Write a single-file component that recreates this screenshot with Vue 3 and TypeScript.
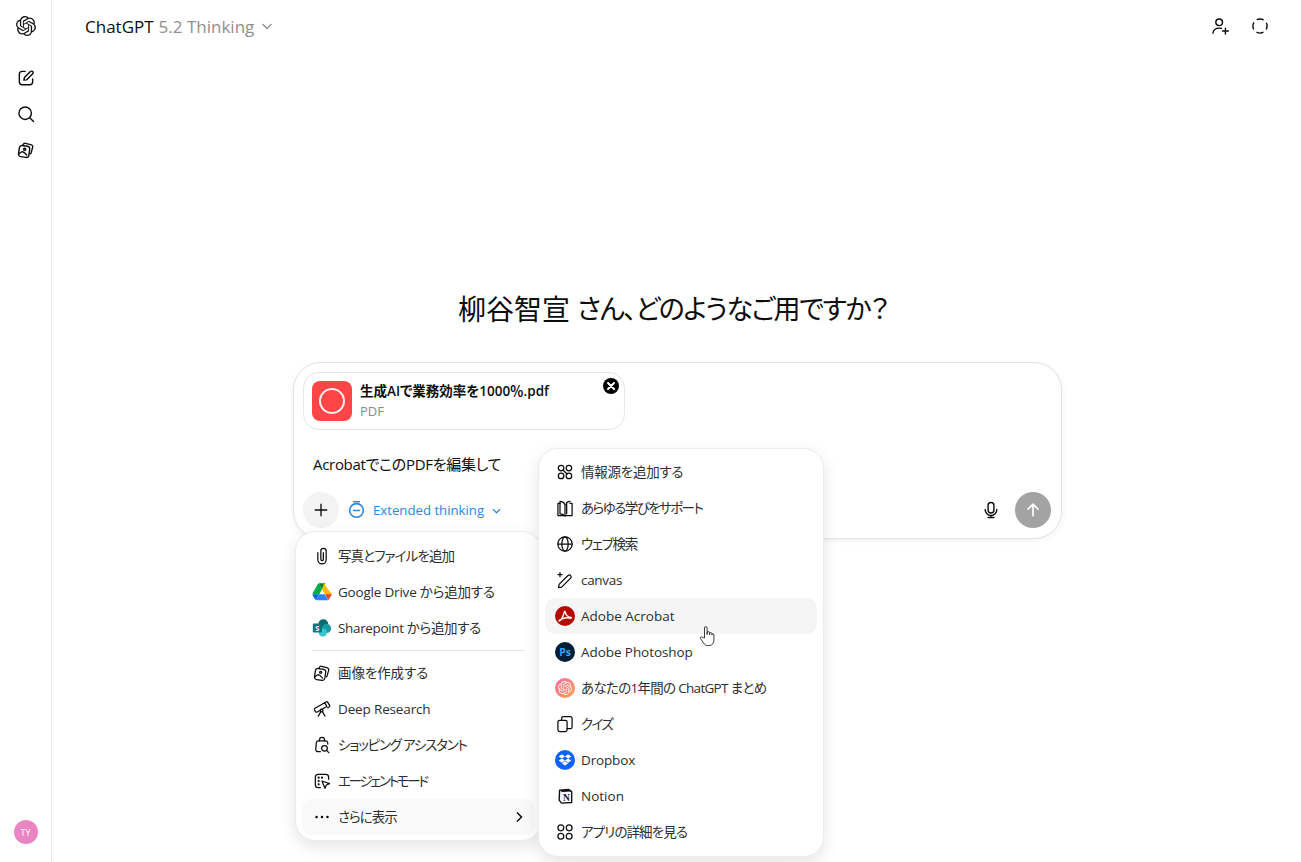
<script setup lang="ts">
const stroke: Record<string, string> = {
  clip: '<path d="M7 8v8.500a5 5 0 0 0 10 0V6a3.200 3.200 0 0 0-6.400 0v10a1.500 1.500 0 0 0 3 0V8"/>',
  image: '<path d="M8.200 6.600l.5-1.300A2.400 2.400 0 0 1 11.600 4l6.800 1.900a2.400 2.400 0 0 1 1.600 3l-1.800 6.300a2.400 2.400 0 0 1-1.200 1.400"/><rect x="3.500" y="7" width="12.500" height="13.500" rx="3" transform="rotate(8 9.700 13.700)"/><path d="M3.800 16.500c2-2.600 4-3 6-1.400l3 3"/><circle cx="10.400" cy="11.200" r="1.300"/>',
  scope: '<path d="M3.600 11.200l11.600-6.700 2.600 4.400-11.500 6.700a1.600 1.600 0 0 1-2.100-.5l-1.100-1.800a1.600 1.600 0 0 1 .5-2.100z"/><path d="M15.200 4.500l2.200-1.200a1 1 0 0 1 1.300.4l2.600 4.300a1 1 0 0 1-.4 1.300l-2.100 1.200"/><circle cx="11.500" cy="13.700" r="1.700"/><path d="M10.500 15.400l-3 5.100M12.600 15.300l3 5.200"/>',
  shop: '<path d="M9 7V5.800a3 3 0 0 1 6 0V7"/><path d="M10 20H7a2.500 2.500 0 0 1-2.500-2.700l.7-8A2.500 2.500 0 0 1 7.700 7h8.600a2.500 2.500 0 0 1 2.500 2.300l.2 1.700"/><circle cx="15" cy="16" r="3.400"/><path d="M17.500 18.500l2.700 2.700"/>',
  agent: '<path d="M10 20H7.500A3.500 3.500 0 0 1 4 16.500v-9A3.500 3.500 0 0 1 7.500 4h9A3.500 3.500 0 0 1 20 7.500V10"/><path d="M12 12l9 3.200-3.800 1.600-1.700 3.900z"/><circle cx="8" cy="8" r=".6"/><circle cx="8" cy="12" r=".6"/><circle cx="12" cy="8" r=".6"/><circle cx="8" cy="16" r=".6"/>',
  sources: '<circle cx="7.300" cy="7.300" r="3.300"/><circle cx="16.700" cy="16.700" r="3.300"/><circle cx="7.300" cy="16.700" r="3.300"/><circle cx="16.700" cy="7.300" r="3.300"/><path d="M9.600 9.600l4.800 4.800"/>',
  book: '<path d="M12 7.500C10.500 5 8 4 6 4v15c2.500 0 4.500 1 6 2.500"/><path d="M12 7.500v14"/><path d="M6 6.500H3.500v14.500H12M14 5.500c1-.8 2.500-1.300 4-1.500M18 6.500h2.500V21H12"/><path d="M14 5.500V19"/>',
  globe: '<circle cx="12" cy="12" r="8.600"/><path d="M3.400 12h17.200"/><ellipse cx="12" cy="12" rx="3.800" ry="8.600"/>',
  canvas: '<path d="M8 20.500l-3.800.6.700-3.800L15.600 6.600a2.200 2.200 0 0 1 3.100 0l.1.100a2.200 2.200 0 0 1 0 3.100z"/><path d="M6 3v5M3.500 5.500h5"/>',
  quiz: '<rect x="3.500" y="7.500" width="11" height="13.500" rx="2"/><path d="M8 7.500V5a2 2 0 0 1 2-2h8.500a2 2 0 0 1 2 2v10.500a2 2 0 0 1-2 2h-4"/>',
  apps: '<circle cx="7" cy="7" r="3.500"/><circle cx="17" cy="7" r="3.500"/><circle cx="7" cy="17" r="3.500"/><circle cx="17" cy="17" r="3.500"/>'
}

const logo = 'M22.2819 9.8211a5.9847 5.9847 0 0 0-.5157-4.9108 6.0462 6.0462 0 0 0-6.5098-2.9A6.0651 6.0651 0 0 0 4.9807 4.1818a5.9847 5.9847 0 0 0-3.9977 2.9 6.0462 6.0462 0 0 0 .7427 7.0966 5.98 5.98 0 0 0 .511 4.9107 6.051 6.051 0 0 0 6.5146 2.9001A5.9847 5.9847 0 0 0 13.2599 24a6.0557 6.0557 0 0 0 5.7718-4.2058 5.9894 5.9894 0 0 0 3.9977-2.9001 6.0557 6.0557 0 0 0-.7475-7.0729zm-9.022 12.6081a4.4755 4.4755 0 0 1-2.8764-1.0408l.1419-.0804 4.7783-2.7582a.7948.7948 0 0 0 .3927-.6813v-6.7369l2.02 1.1686a.071.071 0 0 1 .038.052v5.5826a4.504 4.504 0 0 1-4.4945 4.4944zm-9.6607-4.1254a4.4708 4.4708 0 0 1-.5346-3.0137l.142.0852 4.783 2.7582a.7712.7712 0 0 0 .7806 0l5.8428-3.3685v2.3324a.0804.0804 0 0 1-.0332.0615L9.74 19.9502a4.4992 4.4992 0 0 1-6.1408-1.6464zM2.3408 7.8956a4.485 4.485 0 0 1 2.3655-1.9728V11.6a.7664.7664 0 0 0 .3879.6765l5.8144 3.3543-2.0201 1.1685a.0757.0757 0 0 1-.071 0l-4.8303-2.7865A4.504 4.504 0 0 1 2.3408 7.872zm16.5963 3.8558L13.1038 8.364 15.1192 7.2a.0757.0757 0 0 1 .071 0l4.8303 2.7913a4.4944 4.4944 0 0 1-.6765 8.1042v-5.6772a.79.79 0 0 0-.407-.667zm2.0107-3.0231l-.142-.0852-4.7735-2.7818a.7759.7759 0 0 0-.7854 0L9.409 9.2297V6.8974a.0662.0662 0 0 1 .0284-.0615l4.8303-2.7866a4.4992 4.4992 0 0 1 6.6802 4.66zM8.3065 12.863l-2.02-1.1638a.0804.0804 0 0 1-.038-.0567V6.0742a4.4992 4.4992 0 0 1 7.3757-3.4537l-.142.0805L8.704 5.459a.7948.7948 0 0 0-.3927.6813zm1.0976-2.3654l2.602-1.4998 2.6069 1.4998v2.9994l-2.5974 1.4997-2.6067-1.4997Z'

const color: Record<string, string> = {
  drive: '<path fill="#0066da" d="M2.200 18.200l1.300 2.200c.3.500.7.900 1.200 1.100L8.800 14.800H.6c0 .6.200 1.100.5 1.600z"/><path fill="#00ac47" d="M12 8.700L7.900 1.900c-.5.300-.9.700-1.200 1.200L.9 13.200c-.2.500-.3 1-.3 1.600h8.200z"/><path fill="#ea4335" d="M19.300 21.500c.5-.3.900-.7 1.200-1.100l.5-.8 2.300-4c.3-.5.500-1 .5-1.600h-8.300l1.700 3.500z"/><path fill="#00832d" d="M12 8.700l4.100-6.800c-.5-.3-1-.4-1.500-.4H9.400c-.5 0-1 .2-1.500.4z"/><path fill="#2684fc" d="M15.200 14.800H8.800l-4.100 6.700c.5.300 1 .4 1.500.4h11.600c.5 0 1-.2 1.500-.4z"/><path fill="#ffba00" d="M19.300 9.100l-3.800-6c-.3-.5-.7-.9-1.200-1.200L12 8.700l3.200 6.100h8.200c0-.6-.2-1.100-.5-1.600z"/>',
  share: '<circle cx="13.500" cy="7.500" r="6" fill="#036c70"/><circle cx="17.500" cy="12.500" r="5.500" fill="#1a9ba1"/><circle cx="13" cy="17.500" r="4.800" fill="#37c6d0"/><rect x="1" y="6.500" width="11" height="11" rx="1.500" fill="#03787c"/><text x="6.500" y="15.200" text-anchor="middle" font-size="9" font-weight="700" fill="#fff" font-family="Open Sans, sans-serif">S</text>',
  acrobat: '<circle cx="12" cy="12" r="12" fill="#b30b00"/><path fill="none" stroke="#fff" stroke-width="1.700" stroke-linejoin="round" d="M5 18c2.300-1 5-6.400 6-10.300.3-1.300 1-1.500 1.200-.5.400 2.700 3 5.700 6.800 6.400 1 .2.600 1.300-.7 1-3.200-.7-8.500 0-11.300 1.500C5.500 16.700 4.400 18 5 18z"/>',
  photoshop: '<circle cx="12" cy="12" r="12" fill="#001e36"/><text x="12" y="16.400" text-anchor="middle" font-size="12.500" font-weight="700" fill="#31a8ff" font-family="Open Sans, sans-serif">Ps</text>',
  recap: `<defs><linearGradient id="rc" x1="0" y1="0" x2="1" y2="1"><stop offset="0" stop-color="#f76aa5"/><stop offset="1" stop-color="#f9a04e"/></linearGradient></defs><circle cx="12" cy="12" r="12" fill="url(#rc)"/><g transform="translate(3.600 3.600) scale(.7)"><path fill="#fff" opacity=".9" d="${logo}"/></g>`,
  dropbox: '<circle cx="12" cy="12" r="12" fill="#0f62fe"/><path fill="#fff" d="M8.300 5.200L4.400 7.700l3.900 2.500 3.700-2.500zM15.700 5.200L12 7.700l3.700 2.500 3.900-2.500zM4.400 12.700l3.900 2.500L12 12.700l-3.700-2.500zM15.700 10.200L12 12.700l3.700 2.500 3.900-2.500zM8.300 16l3.700 2.800 3.700-2.800-3.700-2.400z"/>',
  notion: '<path fill="#fff" stroke="#111" stroke-width="1.700" stroke-linejoin="round" d="M5.500 5L16.500 4.200 20 6.700V19.800L7.800 20.500 5 17z"/><path fill="#111" d="M5.500 5l3 2.300 11.500-.6-3.500-2.500z"/><text x="13.800" y="18" text-anchor="middle" font-size="11.500" font-weight="700" fill="#111" font-family="Liberation Serif, serif">N</text>'
}

type Row = { label: string; icon?: string; brand?: string; ls: number }
const leftTop: Row[] = [
  { label: '写真とファイルを追加', icon: 'clip', ls: -0.9 },
  { label: 'Google Drive から追加する', brand: 'drive', ls: -0.2 },
  { label: 'Sharepoint から追加する', brand: 'share', ls: -0.35 }
]
const leftBottom: Row[] = [
  { label: '画像を作成する', icon: 'image', ls: -0.1 },
  { label: 'Deep Research', icon: 'scope', ls: -0.15 },
  { label: 'ショッピング アシスタント', icon: 'shop', ls: -1.2 },
  { label: 'エージェントモード', icon: 'agent', ls: -2.3 }
]
const rightRows: Row[] = [
  { label: '情報源を追加する', icon: 'sources', ls: -0.25 },
  { label: 'あらゆる学びをサポート', icon: 'book', ls: -1.55 },
  { label: 'ウェブ検索', icon: 'globe', ls: -1.2 },
  { label: 'canvas', icon: 'canvas', ls: -0.3 },
  { label: 'Adobe Acrobat', brand: 'acrobat', ls: 0 },
  { label: 'Adobe Photoshop', brand: 'photoshop', ls: -0.07 },
  { label: 'あなたの1年間の ChatGPT まとめ', brand: 'recap', ls: -0.7 },
  { label: 'クイズ', icon: 'quiz', ls: -1.6 },
  { label: 'Dropbox', brand: 'dropbox', ls: -0.15 },
  { label: 'Notion', brand: 'notion', ls: 0 },
  { label: 'アプリの詳細を見る', icon: 'apps', ls: -0.9 }
]
const markup = (r: Row) => (r.icon ? stroke[r.icon] : color[r.brand as string])
</script>

<template>
  <div class="app">
    <aside class="rail">
      <svg class="rail-logo" viewBox="0 0 24 24"><path :d="logo" fill="#111" /></svg>
      <div class="rail-icons">
        <svg class="ico" viewBox="0 0 24 24"><path d="M11 4H7.500A3.500 3.500 0 0 0 4 7.500v9A3.500 3.500 0 0 0 7.500 20h9a3.500 3.500 0 0 0 3.500-3.500V13" /><path d="M9.500 14.500l.6-3L17.300 4.300a1.900 1.900 0 0 1 2.700 0 1.900 1.900 0 0 1 0 2.700l-7.200 7.200z" /></svg>
        <svg class="ico" viewBox="0 0 24 24"><circle cx="11" cy="11" r="7.500" /><path d="M16.500 16.500L21 21" /></svg>
        <svg class="ico" viewBox="0 0 24 24" v-html="stroke.image"></svg>
      </div>
      <div class="avatar">TY</div>
    </aside>

    <main class="main">
      <header class="top">
        <div class="model"><span>ChatGPT</span> <span class="ver">5.2 Thinking</span>
          <svg class="caret" viewBox="0 0 12 12"><path d="M1.500 4l4.500 4.500L10.500 4" /></svg>
        </div>
        <div class="top-actions">
          <svg class="ico" viewBox="0 0 24 24"><circle cx="11" cy="7.500" r="4" /><path d="M3.500 20.500c.5-4 3.500-6 7.500-6 1 0 2 .2 2.700.4" /><path d="M18.500 14.500v7M15 18h7" /></svg>
          <svg class="ico dash" viewBox="0 0 24 24"><circle cx="12" cy="12" r="8.500" stroke-dasharray="8.700 4.650" stroke-dashoffset="4.350" /></svg>
        </div>
      </header>

      <section class="center">
        <h1 class="title"><span>柳谷智宣</span><span class="title-kana">さん、どのようなご用ですか？</span></h1>
        <div class="composer">
          <div class="chip">
            <div class="file-ico"><span class="ring"></span></div>
            <div class="file-meta">
              <div class="file-name">生成AIで業務効率を1000％.pdf</div>
              <div class="file-type">PDF</div>
            </div>
            <svg class="close" viewBox="0 0 16 16"><circle cx="8" cy="8" r="8" fill="#000" /><path d="M5 5l6 6M11 5l-6 6" stroke="#fff" stroke-width="2" stroke-linecap="round" /></svg>
          </div>
          <div class="prompt">AcrobatでこのPDFを編集して</div>
          <div class="tools">
            <button class="plus"><svg viewBox="0 0 24 24"><path d="M12 4.500v15M4.500 12h15" /></svg></button>
            <div class="thinking">
              <svg class="timer" viewBox="0 0 20 20"><circle cx="10" cy="11" r="7.200" /><path d="M7 1.800h6M6.800 11h6.400" /></svg>
              <span>Extended thinking</span>
              <svg class="caret blue" viewBox="0 0 12 12"><path d="M2 4.500l4 4 4-4" /></svg>
            </div>
            <div class="spacer"></div>
            <svg class="mic" viewBox="0 0 24 24"><rect x="8.500" y="3" width="7" height="12.500" rx="3.500" /><path d="M5 11.500a7 7 0 0 0 14 0M12 18.500V21M8.500 21h7" /></svg>
            <button class="send"><svg viewBox="0 0 24 24"><path d="M12 19V5.500M6 11l6-6 6 6" /></svg></button>
          </div>

          <div class="menu menu-left">
            <div v-for="r in leftTop" :key="r.label" class="row">
              <svg :class="['row-ico', r.icon ? 'ico' : '']" viewBox="0 0 24 24" v-html="markup(r)"></svg>
              <span :style="{ letterSpacing: r.ls + 'px' }">{{ r.label }}</span>
            </div>
            <div class="divider"></div>
            <div v-for="r in leftBottom" :key="r.label" class="row">
              <svg class="row-ico ico" viewBox="0 0 24 24" v-html="markup(r)"></svg>
              <span :style="{ letterSpacing: r.ls + 'px' }">{{ r.label }}</span>
            </div>
            <div class="row active">
              <svg class="row-ico" viewBox="0 0 24 24"><circle cx="5.500" cy="12" r="1.500" /><circle cx="12" cy="12" r="1.500" /><circle cx="18.500" cy="12" r="1.500" /></svg>
              <span class="more">さらに表示</span>
              <svg class="chev" viewBox="0 0 12 12"><path d="M4 1.500L8.500 6 4 10.500" /></svg>
            </div>
          </div>

          <div class="menu menu-right">
            <div v-for="r in rightRows" :key="r.label" :class="['row', r.brand === 'acrobat' ? 'active strong' : '']">
              <svg :class="['row-ico', r.icon ? 'ico' : '']" viewBox="0 0 24 24" v-html="markup(r)"></svg>
              <span :style="{ letterSpacing: r.ls + 'px' }">{{ r.label }}</span>
            </div>
            <svg class="hand" viewBox="0 0 16 22"><path d="M5.500 13V3a1.300 1.300 0 0 1 2.600 0v6.500-1.700a1.200 1.200 0 0 1 2.400 0v2-1a1.200 1.200 0 0 1 2.400 0v1.200-.2a1 1 0 0 1 2 0V15c0 3-1.500 5.500-4.500 5.500H8.500c-2 0-3-1-4-2.500l-3-4.500c-.7-1.200.8-2.300 1.800-1.300z" /></svg>
          </div>
        </div>
      </section>
    </main>
  </div>
</template>

<style scoped>
.app {
  display: flex;
  height: 862px;
  overflow: hidden;
  background: #fff;
  color: #0d0d0d;
  font-family: "Open Sans", "Noto Sans CJK JP", sans-serif;
  font-feature-settings: "palt";
}
.rail {
  width: 51px;
  flex: none;
  border-right: 1px solid #ececec;
  display: flex;
  flex-direction: column;
  align-items: center;
  padding-top: 16px;
  box-sizing: content-box;
}
.rail-logo { width: 20px; height: 20px; }
.rail-icons {
  display: flex;
  flex-direction: column;
  gap: 16px;
  margin-top: 32px;
}
.ico {
  width: 20px;
  height: 20px;
  fill: none;
  stroke: #0d0d0d;
  stroke-width: 1.7;
  stroke-linecap: round;
  stroke-linejoin: round;
  display: block;
}
.dash { stroke-linecap: butt; }
.avatar {
  margin-top: auto;
  margin-bottom: 18px;
  width: 24px;
  height: 24px;
  border-radius: 50%;
  background: #e985c2;
  color: #fff;
  font-size: 9px;
  display: flex;
  align-items: center;
  justify-content: center;
}
.main { flex: 1; min-width: 0; display: flex; flex-direction: column; }
.top {
  height: 52px;
  flex: none;
  display: flex;
  align-items: center;
  justify-content: space-between;
  padding: 0 31px 0 33px;
}
.model { font-size: 17px; display: flex; align-items: center; gap: 5px; }
.ver { color: #8f8f8f; }
.caret { width: 12px; height: 12px; fill: none; stroke: #8f8f8f; stroke-width: 1.300; margin-left: 2px; }
.caret.blue { stroke: #2b87dc; margin-left: 0; width: 11px; height: 11px; }
.top-actions { display: flex; gap: 20px; }
.center { display: flex; flex-direction: column; align-items: center; }
.title {
  margin: 238px 7px 0 0;
  font-size: 28px;
  line-height: 38px;
  font-weight: 400;
  display: flex;
  gap: 7px;
}
.title-kana { font-size: 27px; letter-spacing: -1.5px; }
.composer {
  position: relative;
  margin: 34px 0 0 2px;
  width: 769px;
  height: 177px;
  box-sizing: border-box;
  border: 1px solid #e3e3e3;
  border-radius: 28px;
  box-shadow: 0 2px 6px rgba(0, 0, 0, 0.06);
  padding: 9px 10px 9px 9px;
  display: flex;
  flex-direction: column;
  background: #fff;
}
.chip {
  position: relative;
  width: 322px;
  height: 58px;
  box-sizing: border-box;
  border: 1px solid #e6e6e6;
  border-radius: 16px;
  display: flex;
  align-items: center;
  padding-left: 8px;
  gap: 8px;
}
.file-ico {
  width: 40px;
  height: 40px;
  border-radius: 8px;
  background: #ff4545;
  display: flex;
  align-items: center;
  justify-content: center;
}
.ring { width: 22px; height: 22px; border: 2px solid #fff; border-radius: 50%; opacity: .9; }
.file-name { font-size: 13.500px; font-weight: 600; line-height: 20px; }
.file-type { font-size: 13px; line-height: 20px; color: #8a8a8a; }
.close { position: absolute; right: 5px; top: 5px; width: 16px; height: 16px; }
.prompt { margin: 22px 0 0 10px; font-size: 15px; letter-spacing: -0.3px; line-height: 24px; }
.tools { display: flex; align-items: center; margin-top: 16px; height: 36px; }
.plus, .send {
  width: 36px;
  height: 36px;
  border: 0;
  padding: 0;
  border-radius: 50%;
  display: flex;
  align-items: center;
  justify-content: center;
}
.plus { background: #f3f3f3; }
.plus svg { width: 20px; height: 20px; fill: none; stroke: #0d0d0d; stroke-width: 1.600; }
.thinking { display: flex; align-items: center; gap: 7px; margin-left: 8px; color: #2b87dc; font-size: 13.200px; }
.timer { width: 19px; height: 19px; fill: none; stroke: #2b87dc; stroke-width: 1.700; stroke-linecap: round; margin-top: -2px; }
.spacer { flex: 1; }
.mic { width: 20px; height: 20px; fill: none; stroke: #0d0d0d; stroke-width: 1.700; stroke-linecap: round; margin-right: 14px; }
.send { background: #a3a3a3; }
.send svg { width: 20px; height: 20px; fill: none; stroke: #fff; stroke-width: 2; stroke-linecap: round; stroke-linejoin: round; }
.menu {
  position: absolute;
  box-sizing: border-box;
  background: #fff;
  border-radius: 20px;
  border: 1px solid #ececec;
  box-shadow: 0 6px 16px rgba(0, 0, 0, 0.1);
  padding: 5px 6px;
}
.menu-left { left: 1px; top: 168px; width: 247px; height: 310px; padding-top: 6px; }
.menu-right { left: 244px; top: 85px; width: 286px; height: 409px; z-index: 2; padding-top: 5px; }
.row {
  height: 36px;
  display: flex;
  align-items: center;
  padding: 0 10px;
  gap: 6px;
  font-size: 13.500px;
  line-height: 20px;
  color: #2e2e2e;
  border-radius: 10px;
  white-space: nowrap;
}
.row-ico { width: 20px; height: 20px; flex: none; display: block; stroke-width: 1.500; }
.more { letter-spacing: -1px; }
.row.active { background: #f9f9f9; }
.row.strong { background: #f5f5f5; }
.divider { height: 1px; background: #e6e6e6; margin: 4px 10px 4px; }
.chev { width: 12px; height: 12px; margin-left: auto; fill: none; stroke: #0d0d0d; stroke-width: 1.500; }
.hand {
  position: absolute;
  left: 160px;
  top: 176px;
  width: 16px;
  height: 22px;
  fill: #fff;
  stroke: #222;
  stroke-width: 0.9;
}
</style>
